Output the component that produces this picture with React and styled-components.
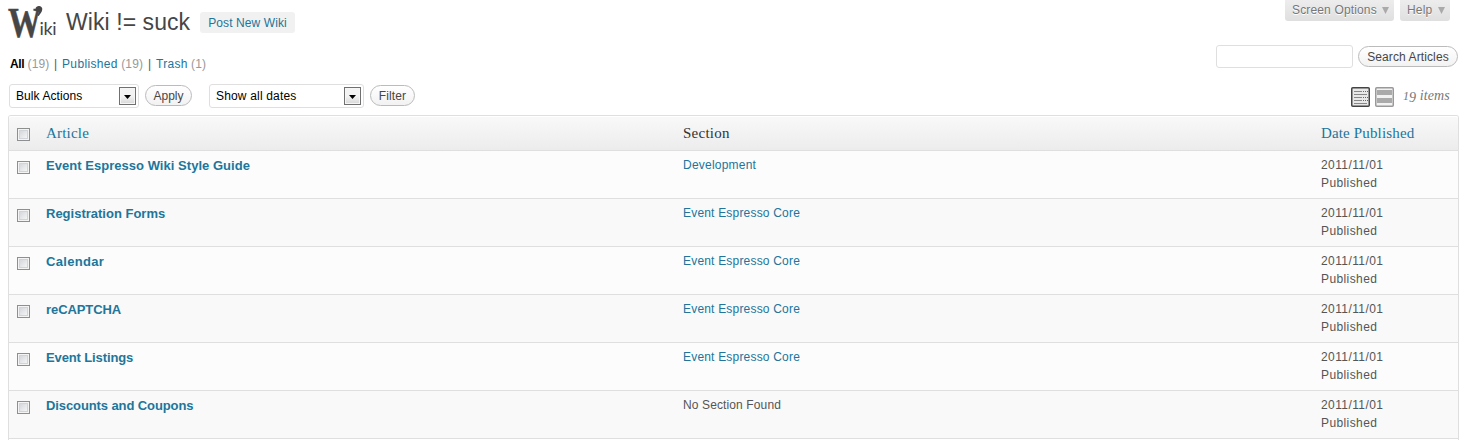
import React from "react";
import styled, { createGlobalStyle, css } from "styled-components";

const GlobalStyle = createGlobalStyle`
  * { box-sizing: border-box; }
  body {
    margin: 0;
    background: #fff;
    color: #555;
    font: 12px/18px "Liberation Sans", Arial, sans-serif;
  }
`;

const linkColor = "#21759b";

const Page = styled.main`
  width: 1471px;
  height: 448px;
  padding: 0 12px 0 8px;
  overflow: hidden;
`;

const Label = styled.span`
  white-space: nowrap;
  letter-spacing: ${(p) => p.$ls || 0}px;
`;

const Header = styled.header`
  display: flex;
  justify-content: space-between;
  height: 44px;
`;

const TitleGroup = styled.div`
  display: flex;
  align-items: flex-start;
`;

const Logo = styled.svg`
  width: 58px;
  height: 44px;
  flex: none;
  overflow: visible;
`;

const Title = styled.h1`
  margin: 8px 0 0;
  width: 134px;
  color: #464646;
  font-weight: 400;
  font-size: 23px;
  line-height: 29px;
`;

const AddNew = styled.a`
  display: flex;
  align-items: center;
  justify-content: center;
  width: 95px;
  height: 21px;
  margin-top: 12px;
  border-radius: 3px;
  background: #f1f1f1;
  color: ${linkColor};
`;

const ScreenTabs = styled.nav`
  display: flex;
  align-items: flex-start;
  gap: 6px;
  padding-right: 9px;
`;

const ScreenTab = styled.a`
  display: flex;
  justify-content: space-between;
  width: ${(p) => p.$w}px;
  height: 21px;
  padding: 1px 5px 0 7px;
  border-radius: 0 0 3px 3px;
  background: linear-gradient(#ededed, #dfdfdf);
  color: #777;
  text-shadow: 0 1px 0 #fff;
`;

const Arrow = styled.i`
  flex: none;
  width: 7px;
  height: 7px;
  margin-top: 6px;
  background: #aaa;
  clip-path: polygon(0 0, 100% 0, 50% 100%);
`;

const FilterRow = styled.div`
  display: flex;
  justify-content: space-between;
  height: 39px;
`;

const StatusLinks = styled.div`
  display: flex;
  margin: 11px 0 0 2px;
`;

const Status = styled.a`
  width: ${(p) => p.$w}px;
  white-space: nowrap;
  color: ${(p) => (p.$current ? "#000" : linkColor)};

  b { letter-spacing: -0.4px; }
`;

const Count = styled.span`
  color: #999;
  letter-spacing: 0.15px;
`;

const Divider = styled.span`
  width: 8px;
  color: #555;
`;

const SearchBox = styled.div`
  display: flex;
  gap: 5px;
  padding: 1px 1px 0 0;
`;

const Field = styled.div`
  width: 137px;
  height: 23px;
  border: 1px solid #dfdfdf;
  border-radius: 3px;
  background: #fff;
`;

const Button = styled.button`
  display: flex;
  align-items: center;
  justify-content: center;
  width: ${(p) => p.$w}px;
  height: 21px;
  margin: 1px 0 0;
  padding: 0;
  border: 1px solid #bbb;
  border-radius: 11px;
  background: linear-gradient(#fff, #f2f2f2);
  color: #464646;
  font: inherit;
`;

const Toolbar = styled.div`
  display: flex;
  align-items: flex-start;
  height: 32px;
  padding: 1px 10px 0 1px;
`;

const Select = styled.div`
  display: flex;
  justify-content: space-between;
  width: ${(p) => p.$w}px;
  height: 24px;
  margin: 0 6px 0 ${(p) => p.$ml || 0}px;
  padding: 2px 2px 0 6px;
  border: 1px solid #dfdfdf;
  border-radius: 3px;
  background: #fff;
  color: #000;
`;

const DropButton = styled.span`
  display: flex;
  align-items: center;
  justify-content: center;
  width: 17px;
  height: 18px;
  border: 1px solid #707070;
  background: linear-gradient(#f3f3f3 50%, #d8d8d8);
  box-shadow: inset 0 0 0 1px #f6f6f6;

  &::before {
    content: "";
    width: 7px;
    height: 4px;
    margin-top: 2px;
    background: #000;
    clip-path: polygon(0 0, 100% 0, 50% 100%);
  }
`;

const ViewSwitch = styled.div`
  display: flex;
  gap: 5px;
  margin: 3px 9px 0 auto;

  svg { display: block; }
`;

const ItemCount = styled.span`
  width: 46px;
  margin-top: 3px;
  color: #777;
  font: italic 14px/18px "Liberation Serif", serif;
  letter-spacing: 0.1px;
  white-space: nowrap;
`;

const OldStyleDigit = styled.span`
  position: relative;
  top: ${(p) => p.$drop || 0}px;
  font-size: ${(p) => p.$size}px;
  line-height: 1;
`;

const Table = styled.section`
  width: 1451px;
  border: 1px solid #dfdfdf;
  border-bottom: 0;
  border-radius: 3px 3px 0 0;
`;

const gridColumns = css`
  display: grid;
  grid-template-columns: 37px 637px 638px 1fr;
`;

const HeadRow = styled.div`
  ${gridColumns}
  height: 35px;
  padding-top: 8px;
  border-bottom: 1px solid #dfdfdf;
  border-radius: 2px 2px 0 0;
  background: linear-gradient(#f9f9f9, #ececec);
  box-shadow: inset 0 1px 0 #fff;
`;

const HeadCell = styled.div`
  color: ${(p) => (p.$link ? linkColor : "#333")};
  font: 15px/19px "Liberation Serif", serif;
  white-space: nowrap;
  letter-spacing: ${(p) => p.$ls}px;
`;

const Row = styled.div`
  ${gridColumns}
  height: 48px;
  padding-top: 5px;
  border-bottom: 1px solid #dfdfdf;
  background: ${(p) => (p.$alt ? "#f9f9f9" : "#fcfcfc")};
`;

const RowTitle = styled.a`
  color: ${linkColor};
  font-weight: 700;
  font-size: 13px;
  line-height: 19px;
`;

const Section = styled.div`
  color: ${(p) => (p.$link ? linkColor : "#555")};
`;

const Check = styled.span`
  display: block;
  width: 13px;
  height: 13px;
  margin: ${(p) => (p.$head ? 4 : 5)}px 0 0 8px;
  border: 1px solid #8e8f8f;
  background: linear-gradient(135deg, #cbcfd5, #f6f6f6 85%);
  box-shadow: inset 0 0 0 1px #f4f4f4, inset 0 0 0 2px #d0d3d8;
`;

const TableEnd = styled.div`
  height: 1px;
`;

const articles = [
  ["Event Espresso Wiki Style Guide", "Development", 0.035, 0.22],
  ["Registration Forms", "Event Espresso Core", 0, 0.19],
  ["Calendar", "Event Espresso Core", 0.3, 0.19],
  ["reCAPTCHA", "Event Espresso Core", -0.08, 0.19],
  ["Event Listings", "Event Espresso Core", -0.12, 0.19],
  ["Discounts and Coupons", "No Section Found", -0.1, 0.12],
];

function WikiLogo() {
  return (
    <Logo viewBox="0 0 58 44" aria-label="Wiki">
      <g fill="#464646">
        <text transform="translate(0 37) scale(.79 1)" fontFamily="Liberation Serif" fontWeight="700" fontSize="42" stroke="#464646" strokeWidth=".5">W</text>
        <path d="M27.5 9.2a3.4 3.2 0 1 1 6.6 1c-.3 2-2 3.4-3.4 5.8l-1.2-.3 1-3.4c-1.6-.3-2.8-1.5-3-3.1z" />
        <text x="31.5" y="35" fontFamily="Lato" fontSize="18" letterSpacing="-.3">iki</text>
      </g>
    </Logo>
  );
}

function ListIcon() {
  return (
    <svg width="19" height="20" viewBox="0 0 19 20">
      <rect x=".75" y=".75" width="17.5" height="18.5" rx="1" fill="#e8e8e8" stroke="#444" strokeWidth="1.5" />
      <path d="M3 4.5h8M3 7.5h13M3 10.5h8M3 13.5h8M3 16.5h13" stroke="#888" />
      <path d="M12 4.5h5M12 10.5h5M12 13.5h5" stroke="#666" strokeDasharray="1 1" />
    </svg>
  );
}

function ExcerptIcon() {
  return (
    <svg width="19" height="20" viewBox="0 0 19 20">
      <rect x=".75" y=".75" width="17.5" height="18.5" rx="1" fill="#f2f2f2" stroke="#999" strokeWidth="1.5" />
      <path d="M2 3h15v5H2zM2 11h15v5H2z" fill="#aaa" />
    </svg>
  );
}

export default function App() {
  return (
    <Page>
      <GlobalStyle />
      <Header>
        <TitleGroup>
          <WikiLogo />
          <Title><Label $ls={0.07}>Wiki != suck</Label></Title>
          <AddNew><Label $ls={0.1}>Post New Wiki</Label></AddNew>
        </TitleGroup>
        <ScreenTabs>
          <ScreenTab $w={109}><Label $ls={0.15}>Screen Options</Label><Arrow /></ScreenTab>
          <ScreenTab $w={50}><Label $ls={0.2}>Help</Label><Arrow /></ScreenTab>
        </ScreenTabs>
      </Header>
      <FilterRow>
        <StatusLinks>
          <Status $w={44} $current><b>All</b> <Count>(19)</Count></Status>
          <Divider>|</Divider>
          <Status $w={86}><Label $ls={0.35}>Published</Label> <Count>(19)</Count></Status>
          <Divider>|</Divider>
          <Status $w={60}><Label $ls={0.3}>Trash</Label> <Count>(1)</Count></Status>
        </StatusLinks>
        <SearchBox>
          <Field />
          <Button $w={100}><Label $ls={0.1}>Search Articles</Label></Button>
        </SearchBox>
      </FilterRow>
      <Toolbar>
        <Select $w={130}><Label $ls={0.08}>Bulk Actions</Label><DropButton /></Select>
        <Button $w={47}><Label>Apply</Label></Button>
        <Select $w={155} $ml={17}><Label $ls={0.17}>Show all dates</Label><DropButton /></Select>
        <Button $w={45}><Label $ls={0.1}>Filter</Label></Button>
        <ViewSwitch><ListIcon /><ExcerptIcon /></ViewSwitch>
        <ItemCount>
          <OldStyleDigit $size={12}>1</OldStyleDigit>
          <OldStyleDigit $size={14} $drop={2}>9</OldStyleDigit> items
        </ItemCount>
      </Toolbar>
      <Table>
        <HeadRow>
          <Check $head />
          <HeadCell $link $ls={0.2}>Article</HeadCell>
          <HeadCell $ls={0.25}>Section</HeadCell>
          <HeadCell $link $ls={0.15}>Date Published</HeadCell>
        </HeadRow>
        {articles.map(([title, section, titleLs, sectionLs], i) => (
          <Row key={title} $alt={i % 2 === 1}>
            <Check />
            <RowTitle><Label $ls={titleLs}>{title}</Label></RowTitle>
            <Section $link={i < 5}><Label $ls={sectionLs}>{section}</Label></Section>
            <div>
              <Label $ls={0.4}>2011/11/01</Label><br />
              <Label $ls={0.4}>Published</Label>
            </div>
          </Row>
        ))}
        <TableEnd />
      </Table>
    </Page>
  );
}
